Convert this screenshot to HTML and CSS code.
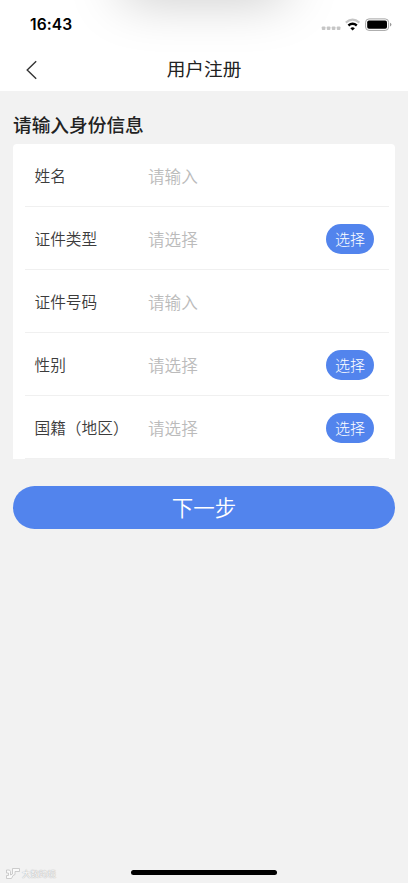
FILE: index.html
```html
<!DOCTYPE html>
<html lang="zh-CN">
<head>
<meta charset="utf-8">
<meta name="viewport" content="width=device-width, initial-scale=1">
<title>用户注册</title>
<link rel="stylesheet" href="styles.css">
</head>
<body>
<div class="screen">
  <header class="top">
    <div class="status">
      <span class="time">16:43</span>
      <svg class="indicators" width="71" height="14" viewBox="0 0 71 14" aria-hidden="true">
        <g fill="#c6c6c6"><rect x=".8" y="8.4" width="3.6" height="3.6" rx=".9"/><rect x="5.8" y="8.4" width="3.6" height="3.6" rx=".9"/><rect x="10.8" y="8.4" width="3.6" height="3.6" rx=".9"/><rect x="15.8" y="8.4" width="3.6" height="3.6" rx=".9"/></g>
        <path d="M24.8 4.6Q31.6 -1.2 38.4 4.6" fill="none" stroke="#c6c6c6" stroke-width="2.1"/>
        <path d="M27.4 7.5Q31.6 3.9 35.8 7.5" fill="none" stroke="#000" stroke-width="2.4"/>
        <path d="M29.3 10.2Q31.6 8.2 33.9 10.2L31.6 12.6Z" fill="#000"/>
        <rect x="44.6" y=".9" width="23" height="11.5" rx="3.4" fill="#fff" stroke="#a5a5a5"/>
        <rect x="46.2" y="2.5" width="19.8" height="8.3" rx="1.8" fill="#000"/>
        <path d="M69 4.8Q70.4 5.2 70.4 6.6T69 8.6Z" fill="#999"/>
      </svg>
    </div>
    <nav class="nav">
      <svg class="back" width="12" height="20" viewBox="0 0 12 20" aria-hidden="true"><path d="M10.2 1.2L1.2 10L10.2 18.7" fill="none" stroke="#333" stroke-width="1.4"/></svg>
      <h1 class="title">用户注册</h1>
    </nav>
  </header>
  <main class="content">
    <h2 class="heading">请输入身份信息</h2>
    <div class="card">
      <div class="row"><span class="label">姓名</span><span class="hint">请输入</span></div>
      <div class="row"><span class="label">证件类型</span><span class="hint">请选择</span><button class="pick">选择</button></div>
      <div class="row"><span class="label">证件号码</span><span class="hint">请输入</span></div>
      <div class="row"><span class="label">性别</span><span class="hint">请选择</span><button class="pick">选择</button></div>
      <div class="row"><span class="label">国籍（地区）</span><span class="hint">请选择</span><button class="pick">选择</button></div>
    </div>
    <button class="next">下一步</button>
  </main>
  <footer class="bottom">
    <div class="mark">
      <svg width="16" height="13" viewBox="0 0 16 13" aria-hidden="true"><path d="M1.5 3H4.5L5.5 4.5V8L7.5 7V1.5H14.5V4.5H10V7.5L8 8.5L6.5 11.5H1.5V8.5H3.5V6H1.5Z" fill="#fafafa" stroke="#c2c2c2" stroke-width=".8"/></svg>
      <span>大数跨境</span>
    </div>
    <div class="home"></div>
  </footer>
</div>
</body>
</html>
```
FILE: styles.css
```css
* { box-sizing: border-box; }
body {
  margin: 0;
  background: #f2f2f2;
  color: #333;
  font-family: "Noto Sans CJK SC", sans-serif;
}
.screen { display: flex; flex-direction: column; height: 883px; overflow: hidden; }
.top { position: relative; height: 91px; overflow: hidden; background: #fff; }
/* soft shadow falling from the top edge */
.top::before {
  content: "";
  position: absolute;
  top: -40px;
  left: 119px;
  width: 170px;
  height: 38px;
  border-radius: 20px;
  box-shadow: 0 0 52px rgba(0, 0, 0, .25);
}
.status {
  position: relative;
  display: flex;
  align-items: flex-start;
  justify-content: space-between;
  height: 48px;
  padding: 15px 16px 0 30px;
}
.time { font: 600 15.6px/20px Inter, sans-serif; color: #000; letter-spacing: .1px; }
.indicators { margin-top: 3px; }
.nav { position: relative; display: grid; grid-template-columns: 26px 1fr 26px; align-items: center; height: 43px; }
.back { margin-left: 26px; }
.title { margin: 0; text-align: center; font-size: 18.7px; font-weight: 400; line-height: 28px; color: #222; padding-bottom: 3px; }
.content { flex: 1; padding: 19px 13px 0; }
.heading { margin: 0 0 6px; font-size: 18.7px; font-weight: 500; line-height: 28px; color: #222; }
.card { background: #fff; border-radius: 4px 4px 0 0; }
.row {
  display: grid;
  grid-template-columns: 113.5px 1fr 47px;
  align-items: center;
  height: 63px;
  padding: 0 22px 1px 21.5px;
  background: linear-gradient(#f0f0f0, #f0f0f0) 12px 62px / 364px 1px no-repeat;
}
.label { font-size: 15.7px; font-weight: 350; color: #3c3c3c; white-space: nowrap; }
.hint { margin-top: 1px; font-size: 16.6px; font-weight: 350; color: #bbb; }
button { border: 0; padding: 0; background: #5284ed; color: #fff; font-family: inherit; font-weight: 300; }
.pick { width: 48px; height: 30px; margin-top: 1px; border-radius: 15px; font-size: 15px; line-height: 30px; }
.next { display: block; width: 100%; height: 43px; margin-top: 27px; padding-bottom: 2px; border-radius: 22px; font-size: 21.5px; font-weight: 350; line-height: 41px; }
.bottom { display: grid; grid-template-columns: 131px 146px 1fr; height: 20px; align-items: start; }
.mark {
  display: flex;
  align-items: center;
  height: 14px;
  margin-top: 3px;
  padding-left: 5px;
  gap: 1px;
  font-size: 8.5px;
  line-height: 14px;
  color: #fafafa;
  text-shadow: 0 0 1px #aaa, 0 0 1px #bbb;
}
.home { height: 5px; margin-top: 7px; border-radius: 3px; background: #000; }
```
